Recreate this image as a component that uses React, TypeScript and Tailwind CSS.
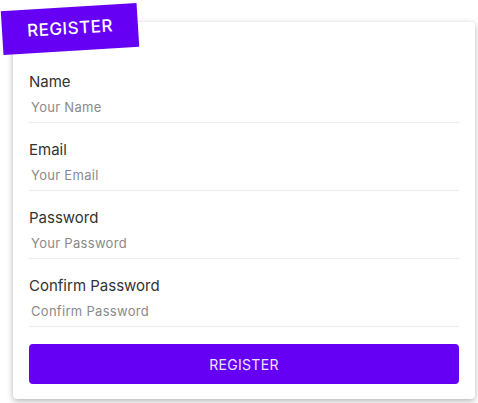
import { useState } from 'react';

const fields = [
  { label: 'Name', placeholder: 'Your Name', type: 'text' },
  { label: 'Email', placeholder: 'Your Email', type: 'email' },
  { label: 'Password', placeholder: 'Your Password', type: 'password' },
  { label: 'Confirm Password', placeholder: 'Confirm Password', type: 'password' },
];

export default function App() {
  const [values, setValues] = useState<Record<string, string>>({});

  return (
    <div className="min-h-screen bg-white font-['Inter',sans-serif] pt-[22px] pl-[13px]">
      <div className="relative w-[462px] h-[377px] rounded bg-white shadow-[0_2px_6px_rgba(0,0,0,0.3)] px-4 pt-[50px]">
        {/* Badge */}
        <div className="absolute left-[-11px] top-[-15px] w-[136px] h-[44px] bg-[#6600f5] rotate-[-3.5deg] flex items-center justify-center">
          <span className="text-white text-[17px] font-medium tracking-[0.5px]">REGISTER</span>
        </div>

        <form className="flex flex-col" onSubmit={(e) => e.preventDefault()}>
          {fields.map((f) => (
            <div key={f.label} className="flex flex-col mb-[17px]">
              <label className="text-[15px] leading-5 text-[#333]">{f.label}</label>
              <input
                type={f.type}
                placeholder={f.placeholder}
                value={values[f.label] ?? ''}
                onChange={(e) => setValues({ ...values, [f.label]: e.target.value })}
                className="h-[31px] px-[2px] text-[13px] tracking-[0.3px] text-[#333] placeholder:text-[#8a8a8a] border-b border-[#ececec] outline-none"
              />
            </div>
          ))}
          <button
            type="submit"
            className="h-[40px] w-full rounded-sm bg-[#6600f5] text-[14px] tracking-[0.3px] text-[#ece4ff]"
          >
            REGISTER
          </button>
        </form>
      </div>
    </div>
  );
}
